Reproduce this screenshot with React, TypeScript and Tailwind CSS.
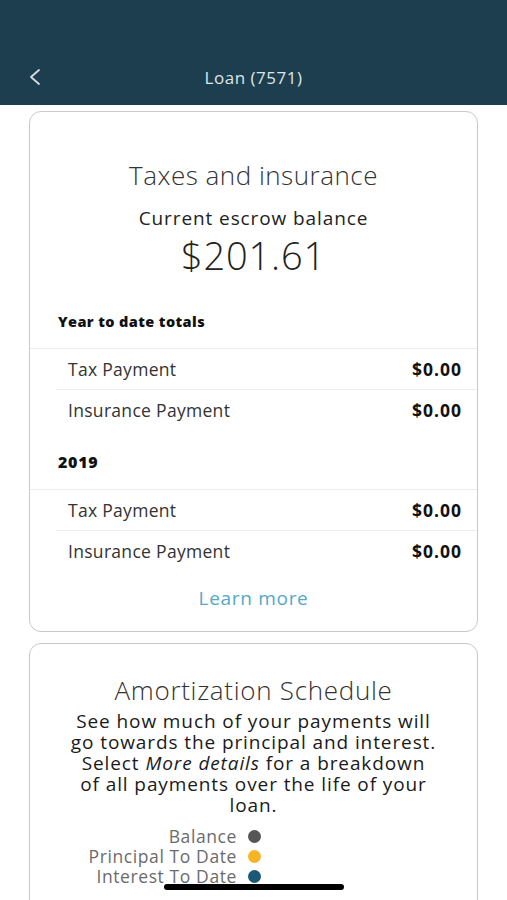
import React from "react";

const RowA = ({ label }: { label: string }) => (
  <div className="flex items-center justify-between h-[40px] pl-[38px] pr-[15px]">
    <span className="text-[17.5px] text-[#333] tracking-[0.3px]">{label}</span>
    <span className="text-[17.5px] font-bold text-[#111] tracking-[1px]">$0.00</span>
  </div>
);

const RowB = ({ label }: { label: string }) => (
  <div className="ml-[26px] border-t border-[#ececec] flex items-center justify-between h-[41px] pl-[12px] pr-[15px]">
    <span className="text-[17.5px] text-[#333] tracking-[0.3px]">{label}</span>
    <span className="text-[17.5px] font-bold text-[#111] tracking-[1px]">$0.00</span>
  </div>
);

export default function App() {
  return (
    <div
      className="w-[507px] h-[900px] bg-white overflow-hidden relative"
      style={{ fontFamily: '"Open Sans", "Liberation Sans", sans-serif' }}
    >
      <div className="h-[105px] bg-[#1c3e4f] flex items-end pb-[15px] relative">
        <svg className="absolute left-[28px] top-[68px]" width="14" height="18" viewBox="0 0 14 18">
          <path d="M11 2 L3 9 L11 16" fill="none" stroke="#d5dde2" strokeWidth="1.8" strokeLinecap="round" strokeLinejoin="round" />
        </svg>
        <div className="w-full text-center text-[17px] text-[#dfe5e8] tracking-[0.5px]">Loan (7571)</div>
      </div>

      <div className="px-[29px] pt-[6px] flex flex-col gap-[11px]">
        <div className="border border-[#c9c9c9] rounded-[12px] pt-[47px] pb-[21px]">
          <div className="text-center text-[26px] font-light text-[#333] leading-[32px] tracking-[0.5px]">Taxes and insurance</div>
          <div className="mt-[15px] text-center text-[19px] text-[#222] leading-[24px] tracking-[0.9px]">Current escrow balance</div>
          <div className="mt-[3px] text-center text-[38px] font-light text-[#222] leading-[44px] tracking-[0.8px]">$201.61</div>

          <div className="mt-[35px] pl-[28px] h-[36px] text-[14.5px] leading-[20px] font-extrabold text-[#111] tracking-[0.4px]">Year to date totals</div>
          <div className="border-t border-[#ececec]">
            <RowA label="Tax Payment" />
            <RowB label="Insurance Payment" />
          </div>

          <div className="mt-[22px] pl-[28px] h-[37px] text-[16px] leading-[20px] font-extrabold text-[#111] tracking-[0.7px]">2019</div>
          <div className="border-t border-[#ececec]">
            <RowA label="Tax Payment" />
            <RowB label="Insurance Payment" />
          </div>

          <div className="mt-[15px] text-center text-[19px] leading-[24px] text-[#55a8c6] tracking-[0.7px]">Learn more</div>
        </div>

        <div className="border border-[#c9c9c9] rounded-[12px] pt-[30px] h-[300px]">
          <div className="text-center text-[26px] font-light text-[#333] leading-[32px] tracking-[0.7px]">Amortization Schedule</div>
          <div className="mt-[5px] text-center text-[19px] font-medium text-[#1a1a1a] leading-[21px] tracking-[0.9px] whitespace-nowrap">
            See how much of your payments will
            <br />
            go towards the principal and interest.
            <br />
            Select <i>More details</i> for a breakdown
            <br />
            of all payments over the life of your
            <br />
            loan.
          </div>
          <div className="mt-[10px] flex flex-col items-end w-[231px] text-[17.5px] text-[#6b6b6b] leading-[20px] tracking-[0.6px]">
            {[
              ["Balance", "bg-[#555555]"],
              ["Principal To Date", "bg-[#f6b526]"],
              ["Interest To Date", "bg-[#1b5878]"],
            ].map(([l, c]) => (
              <div key={l} className="flex items-center gap-[11px]">
                <span>{l}</span>
                <span className={`w-[13px] h-[13px] rounded-full ${c}`} />
              </div>
            ))}
          </div>
        </div>
      </div>

      <div className="absolute left-[164px] top-[884px] w-[180px] h-[6px] rounded-full bg-black" />
    </div>
  );
}
